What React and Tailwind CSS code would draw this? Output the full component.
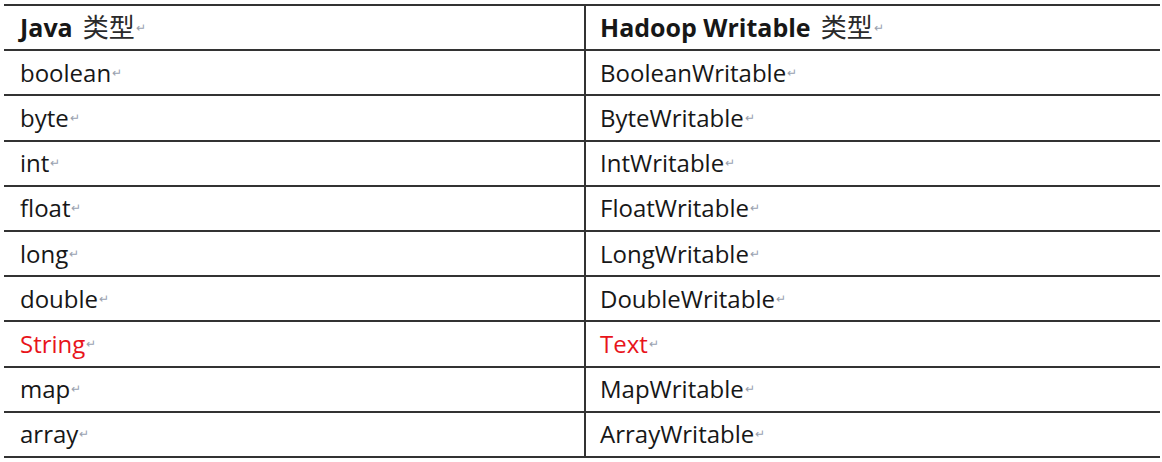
import React from 'react';

const rows = [
  ['boolean', 'BooleanWritable'],
  ['byte', 'ByteWritable'],
  ['int', 'IntWritable'],
  ['float', 'FloatWritable'],
  ['long', 'LongWritable'],
  ['double', 'DoubleWritable'],
  ['String', 'Text', true],
  ['map', 'MapWritable'],
  ['array', 'ArrayWritable'],
];

const Mark = () => <span className="text-[12px] font-normal text-gray-400 ml-px">↵</span>;

const Cell = ({ children, first }) => (
  <div className={`flex items-center h-full ${first ? 'pl-4' : 'pl-[14px] border-l-2 border-[#333]'}`}>
    {children}
  </div>
);

export default function App() {
  return (
    <div
      className="w-[1162px] h-[462px] bg-white pt-1 pl-1 text-[#171717]"
      style={{ fontFamily: '"Open Sans", "Noto Sans CJK SC", sans-serif' }}
    >
      <div className="w-[1156px] border-t-2 border-[#333]">
        <div className="grid grid-cols-[580px_1fr] h-[45.2px] border-b-2 border-[#333] text-[25px] font-bold">
          <Cell first>
            Java <span className="font-normal ml-2.5 text-[26px] text-[#2a2a2a]">类型</span>
            <Mark />
          </Cell>
          <Cell>
            Hadoop Writable <span className="font-normal ml-2.5 text-[26px] text-[#2a2a2a]">类型</span>
            <Mark />
          </Cell>
        </div>
        {rows.map(([a, b, red], i) => (
          <div
            key={i}
            className={`grid grid-cols-[580px_1fr] h-[45.2px] border-b-2 border-[#333] text-[24px] ${red ? 'text-[#e8141b]' : ''}`}
          >
            <Cell first>
              {a}
              <Mark />
            </Cell>
            <Cell>
              {b}
              <Mark />
            </Cell>
          </div>
        ))}
      </div>
    </div>
  );
}
